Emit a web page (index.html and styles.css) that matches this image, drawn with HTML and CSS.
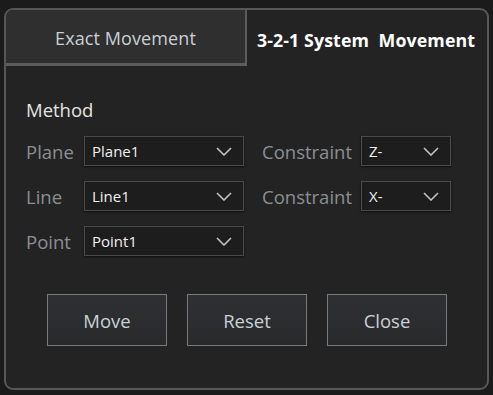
FILE: index.html
```html
<!DOCTYPE html>
<html>
<head>
<meta charset="utf-8">
<link rel="stylesheet" href="styles.css">
</head>
<body>
<div class="panel">
  <div class="tabs">
    <div class="tab tab-inactive">Exact Movement</div>
    <div class="tab tab-active">3-2-1 System&nbsp; Movement</div>
  </div>
  <div class="content">
    <div class="method">Method</div>
    <div class="grid">
      <div class="label">Plane</div>
      <div class="select wide"><span>Plane1</span><svg class="chev" width="16" height="9" viewBox="0 0 16 9"><polyline points="1,1 8,8 15,1" fill="none" stroke="#bfc3c7" stroke-width="1.6"/></svg></div>
      <div class="label right">Constraint</div>
      <div class="select narrow"><span>Z-</span><svg class="chev" width="16" height="9" viewBox="0 0 16 9"><polyline points="1,1 8,8 15,1" fill="none" stroke="#bfc3c7" stroke-width="1.6"/></svg></div>

      <div class="label">Line</div>
      <div class="select wide"><span>Line1</span><svg class="chev" width="16" height="9" viewBox="0 0 16 9"><polyline points="1,1 8,8 15,1" fill="none" stroke="#bfc3c7" stroke-width="1.6"/></svg></div>
      <div class="label right">Constraint</div>
      <div class="select narrow"><span>X-</span><svg class="chev" width="16" height="9" viewBox="0 0 16 9"><polyline points="1,1 8,8 15,1" fill="none" stroke="#bfc3c7" stroke-width="1.6"/></svg></div>

      <div class="label">Point</div>
      <div class="select wide"><span>Point1</span><svg class="chev" width="16" height="9" viewBox="0 0 16 9"><polyline points="1,1 8,8 15,1" fill="none" stroke="#bfc3c7" stroke-width="1.6"/></svg></div>
    </div>
    <div class="buttons">
      <div class="btn">Move</div>
      <div class="btn">Reset</div>
      <div class="btn">Close</div>
    </div>
  </div>
</div>
</body>
</html>
```
FILE: styles.css
```css
html, body {
  margin: 0;
  padding: 0;
  background: #1b1b1b;
  width: 493px;
  height: 395px;
  overflow: hidden;
  font-family: "Open Sans", "Noto Sans", sans-serif;
}
.panel {
  margin: 8px 0 0 4px;
  width: 485px;
  height: 382px;
  box-sizing: border-box;
  border: 2px solid #575757;
  border-radius: 9px;
  background: #232323;
  overflow: hidden;
}
.tabs {
  display: flex;
  height: 56px;
}
.tab {
  display: flex;
  align-items: center;
  justify-content: center;
  font-size: 18px;
  letter-spacing: 0.1px;
}
.tab-inactive {
  width: 239px;
  background: #2f2f2f;
  color: #c9d0d6;
  border-bottom: 3px solid #5c5c5c;
  border-right: 2px solid #5c5c5c;
  padding-top: 3px;
}
.tab-active {
  flex: 1;
  color: #ffffff;
  font-weight: 700;
  font-size: 17.8px;
  padding-top: 3px;
  padding-right: 2px;
}
.content {
  padding: 31px 0 0 20px;
}
.method {
  color: #e4e4e4;
  font-size: 18.5px;
  line-height: 26px;
  margin-bottom: 13px;
}
.grid {
  display: grid;
  grid-template-columns: 58px 160px 117px 90px;
  grid-auto-rows: 30px;
  row-gap: 15px;
}
.label {
  color: #8b8f93;
  font-size: 18.5px;
  display: flex;
  align-items: center;
}
.label.right {
  padding-left: 18px;
}
.select {
  box-sizing: border-box;
  border: 1px solid #4a4a4a;
  background: #1d1d1d;
  box-shadow: 0 1px 2px rgba(0,0,0,0.6);
  display: flex;
  align-items: center;
  justify-content: space-between;
  padding: 0 11px 0 7px;
  color: #f0f0f0;
  font-size: 15px;
}
.chev {
  display: block;
}
.buttons {
  display: flex;
  gap: 20px;
  padding-left: 21px;
  margin-top: 38px;
  align-items: center;
}
.btn {
  width: 120px;
  height: 52px;
  box-sizing: border-box;
  border: 1px solid #7a7a7a;
  background: linear-gradient(#2e3033, #282a2c);
  color: #c9d0d6;
  font-size: 18.5px;
  display: flex;
  align-items: center;
  justify-content: center;
}
```
